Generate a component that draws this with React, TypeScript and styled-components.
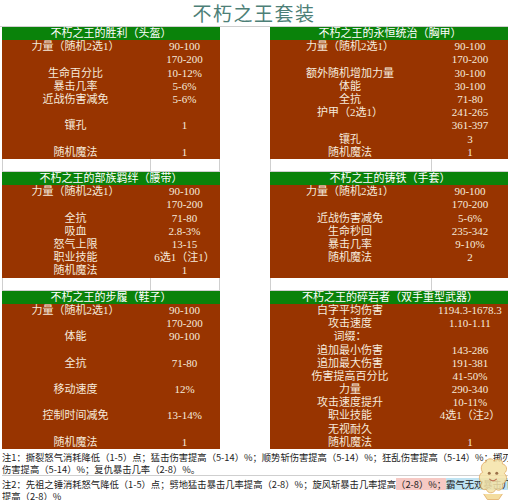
import React from "react";
import styled, { createGlobalStyle } from "styled-components";

const GlobalStyle = createGlobalStyle`
  body {
    margin: 0;
    background: #ffffff;
    font-family: "Liberation Serif", "Noto Sans CJK SC", serif;
  }
`;

const colors = {
  green: "#0a820a",
  brown: "#983400",
  cream: "#f6eadc",
  grid: "#cfcfcf",
  title: "#4d7f77",
  ink: "#222222",
};

const ROW = 13.2;

const Page = styled.div`
  position: relative;
  width: 508px;
  height: 500px;
  overflow: hidden;
  background: #fff;
`;

const Title = styled.h1`
  margin: 0;
  height: 26px;
  border-bottom: 1px solid ${colors.grid};
  text-align: center;
  font-family: "Noto Sans CJK SC", sans-serif;
  font-weight: 400;
  font-size: 19px;
  line-height: 26px;
  letter-spacing: 1.5px;
  color: ${colors.title};
`;

const Board = styled.div`
  display: flex;
  flex-direction: column;
  padding-left: 2px;
`;

const Group = styled.div`
  display: grid;
  grid-template-columns: 218px 50px 240px;
  align-items: stretch;
`;

const PanelBox = styled.div`
  display: flex;
  flex-direction: column;
  background: ${colors.brown};
`;

const Header = styled.div`
  height: ${ROW}px;
  line-height: ${ROW}px;
  background: ${colors.green};
  color: #ffffff;
  text-align: center;
  font-size: 11px;
  white-space: nowrap;
`;

const Row = styled.div<{ $cols: string }>`
  display: grid;
  grid-template-columns: ${(p) => p.$cols};
  height: ${ROW}px;
  line-height: ${ROW}px;
  color: ${colors.cream};
  font-size: 11px;
  text-align: center;
  white-space: nowrap;
`;

const Spacer = styled.div<{ $cols: string }>`
  display: grid;
  grid-template-columns: ${(p) => p.$cols};
  height: ${ROW}px;
  box-sizing: border-box;
  border: 1px solid ${colors.grid};
  border-top: none;

  & > span + span {
    border-left: 1px solid ${colors.grid};
  }
`;

const Notes = styled.div`
  display: flex;
  flex-direction: column;
  padding-left: 2px;
  font-family: "Noto Sans CJK SC", sans-serif;
  font-size: 9.3px;
  color: ${colors.ink};
`;

const Note = styled.div`
  border-bottom: 1px solid ${colors.grid};
  padding-top: 2px;
`;

const NoteLine = styled.div`
  height: 12px;
  line-height: 12px;
  white-space: nowrap;
  overflow: hidden;
`;

const Mark = styled.span<{ $tone: "pink" | "blue" }>`
  background: ${(p) => (p.$tone === "pink" ? "#f6c9c4" : "#bfe3f2")};
  border-radius: 2px;
`;

const Mascot = styled.svg`
  position: absolute;
  right: 0;
  bottom: 0;
  opacity: 0.85;
`;

type Line = [string, string];

const LEFT = "147px 71px";
const RIGHT = "160px 80px";

const Panel = ({ title, rows, cols }: { title: string; rows: Line[]; cols: string }) => (
  <PanelBox>
    <Header>{title}</Header>
    {rows.map(([label, value], i) => (
      <Row key={i} $cols={cols}>
        <span>{label}</span>
        <span>{value}</span>
      </Row>
    ))}
  </PanelBox>
);

const GapRow = () => (
  <Group>
    <Spacer $cols={LEFT}>
      <span />
      <span />
    </Spacer>
    <span />
    <Spacer $cols={RIGHT}>
      <span />
      <span />
    </Spacer>
  </Group>
);

const helm: Line[] = [
  ["力量（随机2选1）", "90-100"],
  ["", "170-200"],
  ["生命百分比", "10-12%"],
  ["暴击几率", "5-6%"],
  ["近战伤害减免", "5-6%"],
  ["", ""],
  ["镶孔", "1"],
  ["", ""],
  ["随机魔法", "1"],
];

const chest: Line[] = [
  ["力量（随机2选1）", "90-100"],
  ["", "170-200"],
  ["额外随机增加力量", "30-100"],
  ["体能", "30-100"],
  ["全抗", "71-80"],
  ["护甲（2选1）", "241-265"],
  ["", "361-397"],
  ["镶孔", "3"],
  ["随机魔法", "1"],
];

const belt: Line[] = [
  ["力量（随机2选1）", "90-100"],
  ["", "170-200"],
  ["全抗", "71-80"],
  ["吸血", "2.8-3%"],
  ["怒气上限", "13-15"],
  ["职业技能", "6选1（注1）"],
  ["随机魔法", "1"],
];

const gloves: Line[] = [
  ["力量（随机2选1）", "90-100"],
  ["", "170-200"],
  ["近战伤害减免", "5-6%"],
  ["生命秒回", "235-342"],
  ["暴击几率", "9-10%"],
  ["随机魔法", "2"],
  ["", ""],
];

const boots: Line[] = [
  ["力量（随机2选1）", "90-100"],
  ["", "170-200"],
  ["体能", "90-100"],
  ["", ""],
  ["全抗", "71-80"],
  ["", ""],
  ["移动速度", "12%"],
  ["", ""],
  ["控制时间减免", "13-14%"],
  ["", ""],
  ["随机魔法", "1"],
];

const weapon: Line[] = [
  ["白字平均伤害", "1194.3-1678.3"],
  ["攻击速度", "1.10-1.11"],
  ["词缀：", ""],
  ["追加最小伤害", "143-286"],
  ["追加最大伤害", "191-381"],
  ["伤害提高百分比", "41-50%"],
  ["力量", "290-340"],
  ["攻击速度提升", "10-11%"],
  ["职业技能", "4选1（注2）"],
  ["无视耐久", ""],
  ["随机魔法", "1"],
];

export default function App() {
  return (
    <>
      <GlobalStyle />
      <Page>
        <Title>不朽之王套装</Title>
        <Board>
          <Group>
            <Panel title="不朽之王的胜利（头盔）" rows={helm} cols={LEFT} />
            <span />
            <Panel title="不朽之王的永恒统治（胸甲）" rows={chest} cols={RIGHT} />
          </Group>
          <GapRow />
          <Group>
            <Panel title="不朽之王的部族羁绊（腰带）" rows={belt} cols={LEFT} />
            <span />
            <Panel title="不朽之王的铸铁（手套）" rows={gloves} cols={RIGHT} />
          </Group>
          <GapRow />
          <Group>
            <Panel title="不朽之王的步履（鞋子）" rows={boots} cols={LEFT} />
            <span />
            <Panel title="不朽之王的碎岩者（双手重型武器）" rows={weapon} cols={RIGHT} />
          </Group>
        </Board>
        <Notes>
          <Note>
            <NoteLine>
              注1：撕裂怒气消耗降低（1-5）点；猛击伤害提高（5-14）%；顺势斩伤害提高（5-14）%；狂乱伤害提高（5-14）%；掷刃斩
            </NoteLine>
            <NoteLine>伤害提高（5-14）%；复仇暴击几率（2-8）%。</NoteLine>
          </Note>
          <Note>
            <NoteLine>
              注2：先祖之锤消耗怒气降低（1-5）点；劈地猛击暴击几率提高（2-8）%；旋风斩暴击几率提高
              <Mark $tone="pink">（2-8）%；</Mark>
              <Mark $tone="blue">霸气无双暴击几率</Mark>
            </NoteLine>
            <NoteLine>提高（2-8）%</NoteLine>
          </Note>
        </Notes>
        <Mascot width="30" height="44" viewBox="0 0 32 46">
          <path
            d="M8 6 C10 1 16 2 17 5 C20 1 27 3 26 8 C31 9 32 15 28 18 C32 21 31 28 26 29 C28 34 23 38 19 35 C17 40 10 40 9 35 C4 37 1 31 4 28 C0 25 1 18 5 17 C2 13 4 7 8 6 Z"
            fill="#f5e3a8"
            stroke="#e0a85a"
            strokeWidth="1"
          />
          <circle cx="12" cy="18" r="1.6" fill="#8a5a2a" />
          <circle cx="20" cy="18" r="1.6" fill="#8a5a2a" />
          <path d="M12 24 Q16 28 20 24" fill="none" stroke="#c0603a" strokeWidth="1.2" />
          <path d="M6 40 L10 46 L22 46 L26 40" fill="#f3d890" stroke="#e0a85a" strokeWidth="1" />
        </Mascot>
      </Page>
    </>
  );
}
